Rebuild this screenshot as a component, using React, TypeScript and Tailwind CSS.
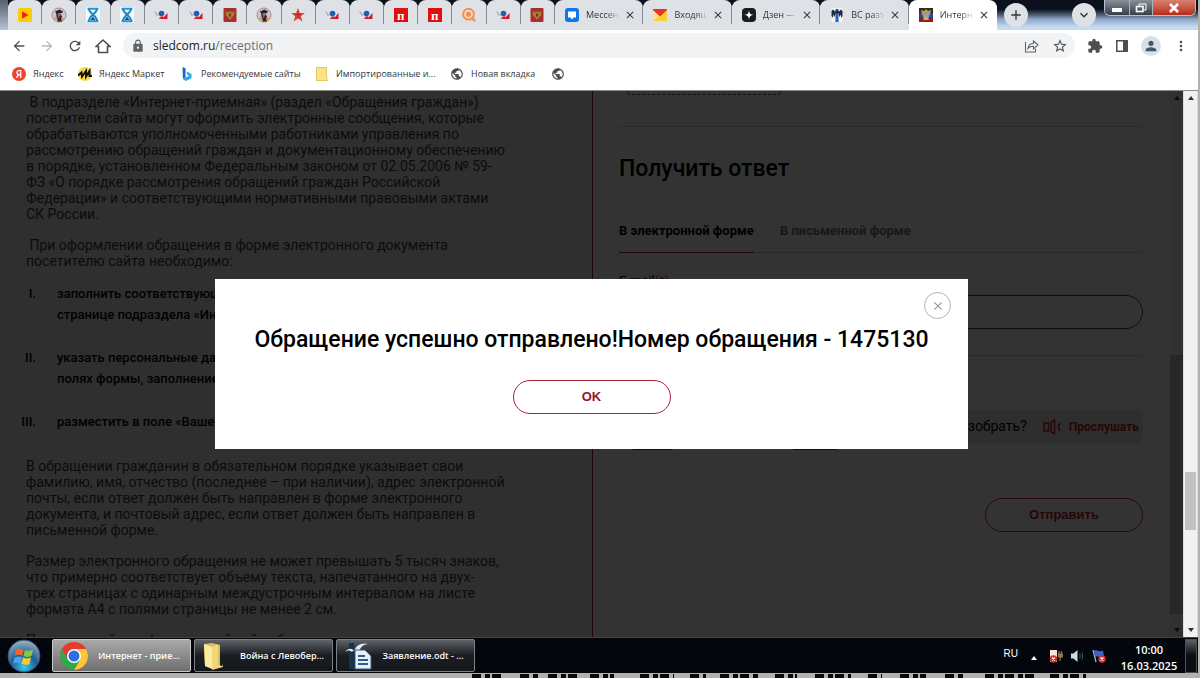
import { ReactNode } from "react";
import clsx from "clsx";
import {
  MdArrowBack, MdArrowForward, MdRefresh, MdLock, MdStarBorder, MdExtension,
  MdPerson, MdMoreVert, MdPublic, MdClose, MdAdd, MdKeyboardArrowDown,
} from "react-icons/md";

/* favicons */

const PlayIcon = () => (
  <svg viewBox="0 0 14 14" className="size-3.5">
    <rect width="14" height="14" rx="1.5" fill="#fc0" />
    <path d="M4 3.2v7.6L10.5 7z" fill="#e8261c" />
  </svg>
);

const PortraitIcon = () => (
  <svg viewBox="0 0 16 16" className="size-4">
    <circle cx="8" cy="8" r="7" fill="#c9c4da" stroke="#b98a6c" strokeWidth="1" />
    <path d="M4 4.500 8.500 2.500 12 4.500 11 6H5z" fill="#26222c" />
    <path d="M6 6h4l.5 2L9 10H7z" fill="#8d6f66" />
    <path d="M5 6h1.500l1 5 2-3 1.500 1v5.500H6.500z" fill="#2b2731" />
    <path d="M3 11l3-1 1 4zM10 10l3 1-2.500 3z" fill="#e08a4b" />
  </svg>
);

const HourglassIcon = () => (
  <svg viewBox="0 0 16 16" className="size-4">
    <rect x="1" width="14" height="16" fill="#f4f9fc" />
    <path d="M2.500 1.800h11M2.500 14.200h11" stroke="#1b9ad6" strokeWidth="2" />
    <path d="M4 2c0 4 8 7 8 12M12 2c0 4-8 7-8 12" fill="none" stroke="#168bc7" strokeWidth="2" />
    <path d="M5.500 13 8 9.500l2.500 3.500z" fill="#1a4f86" />
  </svg>
);

const CourtIcon = () => (
  <svg viewBox="0 0 16 16" className="size-4">
    <path d="M1.500 4.500 8 10" stroke="#d88a90" strokeWidth="1" strokeDasharray="1.500 1" />
    <path d="M5.500 11.500 9.500 9l1 1.500L14.500 6v6H8z" fill="#d5182c" />
    <circle cx="8.500" cy="6.500" r="2.800" fill="#1f5fae" />
    <path d="M2 5l2.500 4" stroke="#8fa3cc" strokeWidth="1" />
  </svg>
);

const EagleIcon = () => (
  <svg viewBox="0 0 14 14" className="size-3.5">
    <rect x=".5" width="13" height="14" rx="1" fill="#a5302c" />
    <path d="M2.500 3l2.500 1.500L6 3l1 1 1-1 1 1.500L11.500 3 11 7.500 8.800 9.500 7 12 5.200 9.500 3 7.500z" fill="#a98037" />
    <path d="M6 5.500h2V8L7 9 6 8z" fill="#9b2320" />
  </svg>
);

const RedStarIcon = () => (
  <svg viewBox="0 0 16 16" className="size-4">
    <path d="M8 1l1.800 5h5l-4 3.200 1.600 5.300L8 11.300l-4.400 3.200 1.600-5.300-4-3.200h5z" fill="#d9412f" />
    <path d="M8 4v8M5 7.500h6" stroke="#b32a20" strokeWidth=".8" />
  </svg>
);

const PiIcon = () => (
  <span className="flex size-3.5 items-center justify-center bg-[#e01010] font-['Liberation_Serif',serif] text-[13px] leading-none font-bold text-white">п</span>
);

const SearchIcon = () => (
  <svg viewBox="0 0 16 16" className="size-4" fill="none" stroke="#f79246">
    <circle cx="7.500" cy="7.200" r="5.400" strokeWidth="2" />
    <circle cx="7.500" cy="7.200" r="2.600" fill="#f79246" stroke="none" />
    <path d="M11 11l3.200 3.200" strokeWidth="2.600" />
  </svg>
);

const MessengerIcon = () => (
  <svg viewBox="0 0 14 14" className="size-3.5">
    <rect width="14" height="14" rx="3" fill="#0f78e8" />
    <path d="M3 3.500h8v6H8.500L7 11.500 5.500 9.500H3z" fill="#fff" />
  </svg>
);

const MailIcon = () => (
  <svg viewBox="0 0 14 12" className="h-3 w-3.5">
    <path d="M0 1h14v11H0z" fill="#fbcf35" />
    <path d="M0 1l7 6-7 5z" fill="#fde08a" />
    <path d="M0 0h14v1L7 7.500 0 1z" fill="#ea3323" />
  </svg>
);

const DzenIcon = () => (
  <svg viewBox="0 0 14 14" className="size-3.5">
    <rect width="14" height="14" rx="4" fill="#1c1c1c" />
    <path d="M7 1.800C7.200 5.600 8.400 6.800 12.200 7 8.400 7.200 7.200 8.400 7 12.200 6.800 8.400 5.600 7.200 1.800 7 5.600 6.800 6.800 5.600 7 1.800z" fill="#fff" />
  </svg>
);

const CoatIcon = () => (
  <svg viewBox="0 0 14 14" className="size-3.5">
    <rect x="1.500" width="11" height="14" fill="#f2f4f8" />
    <path d="M7 1v13" stroke="#2762b4" strokeWidth="3" />
    <path d="M1.500 3 3 1.500 5 3.500 7 2 9 3.500 11 1.500 12.500 3v5L11 10V6.500L9.500 9 8.500 5.500h-3L4.500 9 3 6.500V10L1.500 8z" fill="#222c3d" />
  </svg>
);

const SledcomIcon = () => (
  <svg viewBox="0 0 14 14" className="size-3.5">
    <rect width="14" height="5" fill="#2b2b35" />
    <rect y="5" width="14" height="5" fill="#27489a" />
    <rect y="9" width="14" height="5" fill="#8d1f22" />
    <path d="M2 2l3 1 2-2 2 2 3-1-1 5H3z" fill="#c69a35" />
    <circle cx="7" cy="8" r="3.200" fill="#6fa3d6" />
    <path d="M4 12l3-5 3 5z" fill="#d8b04a" />
  </svg>
);

const pinned = [
  PlayIcon, PortraitIcon, HourglassIcon, HourglassIcon, CourtIcon, CourtIcon, EagleIcon, PortraitIcon,
  RedStarIcon, CourtIcon, CourtIcon, PiIcon, PiIcon, SearchIcon, CourtIcon, EagleIcon,
];

const tabs = [
  { title: "Мессен", icon: MessengerIcon },
  { title: "Входящ", icon: MailIcon },
  { title: "Дзен —", icon: DzenIcon },
  { title: "ВС разъ", icon: CoatIcon },
  { title: "Интерн", icon: SledcomIcon, active: true },
];

const TabStrip = () => (
  <header className="flex h-[30px] shrink-0 bg-linear-to-b from-[#0a111c] from-30% via-[#8fa9c8] via-65% to-[#c5dbf3] to-90%">
    <div className="w-2 shrink-0 bg-linear-to-b from-[#55606e] to-[#b4c4d6]" />
    <div className="flex w-[547px] shrink-0 bg-linear-to-b from-[#0a111c] from-20% to-[#dee1e6] to-20%">
      {pinned.map((Icon, i) => (
        <button key={i} aria-label={`Вкладка ${i + 1}`} className="flex flex-1 items-center rounded-t-lg bg-[#dee1e6]">
          <span className="flex flex-1 justify-center"><Icon /></span>
          <span className="h-[18px] w-px bg-[#85898f]" />
        </button>
      ))}
    </div>
    <div className="flex w-[442px] shrink-0 bg-linear-to-b from-[#0a111c] from-20% to-[#dee1e6] to-20%">
      {tabs.map(({ title, icon: Icon, active }) => (
        <div key={title} className={clsx("flex min-w-0 flex-1 items-center rounded-t-lg pl-2.5", active ? "bg-white" : "bg-[#dee1e6]")}>
          <Icon />
          <button className="ml-[7px] w-[34px] mask-r-from-60% text-left text-[9px] whitespace-nowrap text-[#33373b]">{title}</button>
          <button aria-label="Закрыть вкладку" className="ml-1 text-[#33363a]"><MdClose className="size-3" /></button>
          {!active && <span className="ml-auto h-[18px] w-px bg-[#85898f]" />}
        </div>
      ))}
    </div>
    <button aria-label="Новая вкладка" className="mt-[3px] ml-[7px] flex size-6 items-center justify-center rounded-full bg-[#dee1e6] text-[#303338]">
      <MdAdd className="size-4" />
    </button>
    <div className="ml-auto flex pr-0.5">
      <button aria-label="Поиск вкладок" className="mt-[3px] mr-2 flex size-6 items-center justify-center rounded-full bg-[#dee1e6] text-[#303338]">
        <MdKeyboardArrowDown className="size-4" />
      </button>
      <div className="flex h-4 overflow-hidden rounded-b-md border border-t-0 border-[#b7c1cc]">
        <button aria-label="Свернуть" className="flex w-[25px] items-center justify-center border-r border-[#aab3bd] bg-linear-to-b from-[#8a9097] to-[#383f48]">
          <span className="mt-1 h-1 w-2.5 bg-white" />
        </button>
        <button aria-label="Развернуть" className="flex w-[23px] items-center justify-center border-r border-[#aab3bd] bg-linear-to-b from-[#8a9097] to-[#383f48]">
          <svg viewBox="0 0 12 10" className="h-2.5 w-3" fill="none" stroke="#fff">
            <path d="M4 3V1h7v6H9" />
            <rect x="1.500" y="3.500" width="6.500" height="5" strokeWidth="1.600" />
          </svg>
        </button>
        <button aria-label="Закрыть" className="flex w-[42px] items-center justify-center bg-linear-to-b from-[#d8806f] to-[#b42a14] text-white">
          <svg viewBox="0 0 12 10" className="h-2.5 w-3" stroke="#fff" strokeWidth="2.600">
            <path d="M2 1l8 8M10 1 2 9" />
          </svg>
        </button>
      </div>
    </div>
  </header>
);

const Toolbar = () => (
  <div className="flex h-[31px] shrink-0 items-center gap-3 bg-white pr-[9px] pl-[11px] text-[#4b4f54]">
    <button aria-label="Назад"><MdArrowBack className="size-4" /></button>
    <button aria-label="Вперед" className="text-[#b5b8bb]"><MdArrowForward className="size-4" /></button>
    <button aria-label="Обновить"><MdRefresh className="size-4" /></button>
    <button aria-label="Главная">
      <svg viewBox="0 0 16 16" className="size-4" fill="none" stroke="currentColor" strokeWidth="1.600">
        <path d="M1 8.500 8 2l7 6.500H12.500v6h-9v-6z" />
      </svg>
    </button>
    <div className="flex h-[25px] flex-1 items-center rounded-full bg-[#f1f3f4] pr-[7px] pl-2">
      <MdLock className="size-3.5 text-[#5f6368]" />
      <a href="#reception" className="ml-2 text-[12px] text-[#6a6e73]"><span className="text-[#202124]">sledcom.ru</span>/reception</a>
      <button aria-label="Поделиться" className="ml-auto">
        <svg viewBox="0 0 16 14" className="h-3.5 w-4" fill="none" stroke="#5f6368" strokeWidth="1.100">
          <path d="M1.500 3v10h10V9.500" />
          <path d="M4 9.500C4.500 6 6.500 4.500 9.500 4.300V2l4.500 4-4.500 3.800V7.300C7 7.200 5.300 8 4 9.500z" />
        </svg>
      </button>
      <button aria-label="Добавить в закладки" className="ml-3"><MdStarBorder className="size-4" /></button>
    </div>
    <button aria-label="Расширения"><MdExtension className="size-4" /></button>
    <button aria-label="Боковая панель">
      <svg viewBox="0 0 14 14" className="size-3.5">
        <path d="M1.800 1.800h10.400v10.400H1.800z" fill="none" stroke="#4b4f54" strokeWidth="1.500" />
        <path d="M8 1h5v12H8z" fill="#4b4f54" />
      </svg>
    </button>
    <button aria-label="Профиль" className="flex size-5 items-center justify-center rounded-full bg-[#dadfe5] text-[#44566c]"><MdPerson className="size-4" /></button>
    <button aria-label="Меню"><MdMoreVert className="size-4" /></button>
  </div>
);

const YandexIcon = () => (
  <span className="flex size-3.5 items-center justify-center rounded-full bg-[#f0412d] text-[10px] leading-none font-semibold text-white">Я</span>
);

const MarketIcon = () => (
  <svg viewBox="0 0 14 14" className="size-3.5">
    <circle cx="7" cy="7" r="7" fill="#fbd83f" />
    <path d="M0 8.500 3.500 5.500 4 9.500 8 4 8 9.500 11.500 4 11.500 9H14" fill="none" stroke="#111" strokeWidth="2" />
  </svg>
);

const BingIcon = () => (
  <svg viewBox="0 0 14 14" className="size-3.5">
    <path d="M2.500 0 5.500 1.200v9.300L3 12z" fill="#1b63c9" />
    <path d="M6.500 4.500 11.500 7v4.200L6 14 2.700 12 9 8.800 7.300 7.800z" fill="#2fa8e6" />
  </svg>
);

const NoteIcon = () => (
  <svg viewBox="0 0 12 14" className="h-3.5 w-3">
    <path d="M.5.500h10V11l1 2.500H.5z" fill="#fbe38a" stroke="#e5c75c" />
  </svg>
);

const GlobeIcon = () => <MdPublic className="size-3.5 text-[#4b4f54]" />;

const bookmarks = [
  { title: "Яндекс", icon: YandexIcon, width: "w-[66px]" },
  { title: "Яндекс Маркет", icon: MarketIcon, width: "w-[102px]" },
  { title: "Рекомендуемые сайты", icon: BingIcon, width: "w-[135px]" },
  { title: "Импортированные и...", icon: NoteIcon, width: "w-[135px]" },
  { title: "Новая вкладка", icon: GlobeIcon, width: "w-[101px]" },
  { title: "", icon: GlobeIcon, width: "w-4" },
];

const Bookmarks = () => (
  <nav className="flex h-[30px] shrink-0 items-center border-b border-[#8a8c8c] bg-white pb-1 pl-3 text-[9px] text-[#33373b]">
    {bookmarks.map(({ title, icon: Icon, width }, i) => (
      <a key={i} href="#bookmark" aria-label={title || "Закладка"} className={clsx("flex shrink-0 items-center gap-[7px] whitespace-nowrap", width)}>
        <span className="flex w-3.5 shrink-0 justify-center"><Icon /></span>
        {title}
      </a>
    ))}
  </nav>
);

/* page */

const Lines = ({ lines, className }: { lines: string[], className?: string }) => (
  <p className={clsx("text-[14px] leading-[16px] whitespace-pre text-[#3c3c3c]", className)}>
    {lines.join("\n")}
  </p>
);

const steps = [
  { num: "I.", text: "заполнить соответствующие поля на\nстранице подраздела «Интернет-приемная»" },
  { num: "II.", text: "указать персональные данные в\nполях формы, заполнение которых" },
  { num: "III.", text: "разместить в поле «Ваше обращение»" },
];

const Rules = () => (
  <section className="w-[592px] shrink-0 overflow-hidden bg-[#ebebeb] pt-[3px] pl-[26px]">
    <Lines
      lines={[
        " В подразделе «Интернет-приемная» (раздел «Обращения граждан»)",
        "посетители сайта могут оформить электронные сообщения, которые",
        "обрабатываются уполномоченными работниками управления по",
        "рассмотрению обращений граждан и документационному обеспечению",
        "в порядке, установленном Федеральным законом от 02.05.2006 № 59-",
        "ФЗ «О порядке рассмотрения обращений граждан Российской",
        "Федерации» и соответствующими нормативными правовыми актами",
        "СК России.",
      ]}
    />
    <Lines className="mt-[15px]" lines={[" При оформлении обращения в форме электронного документа", "посетителю сайта необходимо:"]} />
    <ol className="mt-[14px] -ml-[6px] flex flex-col gap-[22px] text-[13px] leading-[21px] font-medium">
      {steps.map(({ num, text }) => (
        <li key={num} className="flex">
          <span className="flex w-4 justify-end whitespace-nowrap">{num}</span>
          <span className="ml-[21px] whitespace-pre">{text}</span>
        </li>
      ))}
    </ol>
    <Lines
      className="mt-[26px]"
      lines={[
        "В обращении гражданин в обязательном порядке указывает свои",
        "фамилию, имя, отчество (последнее – при наличии), адрес электронной",
        "почты, если ответ должен быть направлен в форме электронного",
        "документа, и почтовый адрес, если ответ должен быть направлен в",
        "письменной форме.",
      ]}
    />
    <Lines
      className="mt-[15px]"
      lines={[
        "Размер электронного обращения не может превышать 5 тысяч знаков,",
        "что примерно соответствует объему текста, напечатанного на двух-",
        "трех страницах с одинарным междустрочным интервалом на листе",
        "формата А4 с полями страницы не менее 2 см.",
      ]}
    />
    <Lines className="mt-[15px]" lines={["Поступивший на официальный сайт обращение"]} />
  </section>
);

const ReplyForm = () => (
  <form className="flex min-w-0 flex-1 flex-col overflow-hidden border-l border-[#b01828] pr-[27px] pl-[26px]">
    <div className="ml-2 h-1 w-[154px] rounded-b border border-t-0 border-dashed border-[#555]" />
    <hr className="mt-[31px] border-[#d0d0d0]" />
    <h2 className="mt-[26px] text-[23px] leading-8 font-medium">Получить ответ</h2>
    <div className="mt-[37px] flex gap-[26px] border-b border-[#d0d0d0] text-[13px] leading-[18px] font-bold">
      <button type="button" className="-mb-px border-b border-[#c41c28] pb-[12px]">В электронной форме</button>
      <button type="button" className="pb-[12px] text-[#777]">В письменной форме</button>
    </div>
    <label htmlFor="email" className="mt-[18px] text-[13px] leading-5">E-mail<span className="text-[#c41c28]">(*)</span></label>
    <input id="email" type="email" className="mt-1 h-[34px] w-full rounded-full border border-[#444] px-4" />
    <hr className="mt-[26px] border-[#d0d0d0]" />
    <div className="mt-[53px] flex h-[35px] items-center justify-end gap-4 rounded-lg bg-[#e4e4e4] pr-1">
      <span className="text-[14px]">Не разобрать?</span>
      <button type="button" className="flex items-center gap-2 text-[12px] font-bold text-[#c41c28]">
        <svg viewBox="0 0 18 16" className="h-4 w-[18px]" fill="none" stroke="currentColor" strokeWidth="1.500">
          <rect x="1" y="4" width="4.500" height="8" />
          <path d="M8 3.500 11.500 1v14L8 12.500zM17 4c-2 2-2 6 0 8" />
        </svg>
        Прослушать
      </button>
    </div>
    <div className="mt-1 ml-[13px] flex h-0.5 gap-[120px]">
      <span className="w-[41px] rounded-b-full bg-[#555]" />
      <span className="w-[45px] rounded-b-full bg-[#555]" />
    </div>
    <button type="submit" className="mt-12 h-[34px] w-[158px] self-end rounded-full border border-[#e01c28] font-['Liberation_Sans',sans-serif] text-[13px] font-bold text-[#c41c28]">Отправить</button>
  </form>
);

const Arrow = ({ down }: { down?: boolean }) => (
  <svg viewBox="0 0 6 4" className={clsx("h-1 w-1.5 fill-[#333]", down && "rotate-180")}><path d="M0 4l3-4 3 4z" /></svg>
);

const Scrollbar = ({ className, children }: { className: string, children: ReactNode }) => (
  <div className={clsx("flex shrink-0 flex-col items-center py-[5px]", className)}>
    <Arrow />
    {children}
    <Arrow down />
  </div>
);

const SuccessDialog = () => (
  <div className="absolute inset-0 flex items-center justify-center bg-black/80">
    <div role="dialog" aria-labelledby="dialog-title" className="relative flex w-[753px] max-w-full flex-col items-center bg-white pt-[45px] pb-[35px]">
      <button aria-label="Закрыть" className="absolute top-[13px] right-[17px] flex size-[27px] items-center justify-center rounded-full border border-[#b3b3b3] text-[#999]">
        <MdClose className="size-3.5 stroke-current" />
      </button>
      <h1 id="dialog-title" className="text-[23px] leading-8 font-medium whitespace-nowrap">Обращение успешно отправлено!Номер обращения - 1475130</h1>
      <button className="mt-[24px] h-[34px] w-[158px] rounded-full border border-[#a3253c] font-['Liberation_Sans',sans-serif] text-[13px] font-bold text-[#96142a]">OK</button>
    </div>
  </div>
);

/* taskbar */

const StartOrb = () => (
  <svg viewBox="0 0 34 34" className="size-[34px]">
    <defs>
      <radialGradient id="orb" cx=".5" cy=".85" r=".8">
        <stop offset="0" stopColor="#38c8f4" />
        <stop offset=".5" stopColor="#1c5f97" />
        <stop offset="1" stopColor="#8fa9bd" />
      </radialGradient>
    </defs>
    <circle cx="17" cy="17" r="16" fill="url(#orb)" stroke="#3c5268" />
    <path d="M9 11c3-2 5-1.500 7.500-.5l-1.500 6c-2.500-1-4.500-1-7.500.5z" fill="#f0642d" />
    <path d="M18 11c3 1.300 5 1 8-.5l-1.500 6.500c-3 1.300-5 1.300-8 0z" fill="#8cc63e" />
    <path d="M7.500 18.500c3-1.300 5-1.300 7.500-.3l-1.500 6c-2.500-1-4.500-1-7.500.3z" fill="#4fa3e6" />
    <path d="M16 18.500c3 1.300 5 1.300 8 0L22.500 25c-3 1.300-5 1-8-.3z" fill="#fbc82f" />
  </svg>
);

const ChromeIcon = () => (
  <svg viewBox="0 0 28 28" className="size-7">
    <circle cx="14" cy="14" r="14" fill="#e33b2e" />
    <path d="M14 7H26.100A14 14 0 0 1 14 28L20.100 17.500z" fill="#fcc934" />
    <path d="M1.900 7A14 14 0 0 0 14 28L20.100 17.500 14 14 7.900 17.500z" fill="#2da94f" />
    <circle cx="14" cy="14" r="7" fill="#fff" />
    <circle cx="14" cy="14" r="5.500" fill="#2d6fe0" />
  </svg>
);

const FolderIcon = () => (
  <svg viewBox="0 0 28 28" className="size-7">
    <path d="M4 2l8-1 8 2v21l-8 2-7-2z" fill="#d9bf5c" />
    <path d="M4 2l8 3v22l-7-3z" fill="#fbeb9e" />
    <path d="M12 5l6-3v21l4 1v-2l1 3-11 3z" fill="#f0d77a" />
  </svg>
);

const OdtIcon = () => (
  <svg viewBox="0 0 28 28" className="size-7">
    <path d="M5 1h5v26H5z" fill="#16324e" />
    <path d="M1 10c4-5 8-3 9-1 2-6 8-9 14-7-5 0-8 4-9 8-2-3-5-3-7 0-2-2-4-2-7 0z" fill="#dfeaf4" />
    <path d="M11 8h10l6 6v13H11z" fill="#e6eef6" stroke="#37618c" />
    <path d="M14 14h7M14 18h10M14 22h10" stroke="#2d5c8c" strokeWidth="2" />
  </svg>
);

const tasks = [
  { title: "Интернет - прие...", icon: ChromeIcon, gap: "pl-[7px]", active: true },
  { title: "Война с Левобер...", icon: FolderIcon, gap: "gap-1 pl-[5px]" },
  { title: "Заявление.odt - ...", icon: OdtIcon, gap: "pl-[7px]" },
];

const Taskbar = () => (
  <footer className="flex h-9 shrink-0 items-center border-t border-[#3a4350] bg-[#03060c] pr-px pl-[7px] text-white">
    <button aria-label="Пуск" className="mr-[11px]"><StartOrb /></button>
    <div className="flex gap-[3px]">
      {tasks.map(({ title, icon: Icon, gap, active }) => (
        <button
          key={title}
          className={clsx(
            "flex h-[33px] w-[139px] items-center rounded-xs border text-[9px] font-semibold whitespace-nowrap",
            gap,
            active
              ? "border-[#c9c9c9] bg-linear-to-b from-[#a9a9a9] to-[#6f6f6f]"
              : "border-[#7c8084] bg-linear-to-b from-[#60646a] via-[#1a1d21] via-50% to-[#15181b]",
          )}
        >
          <Icon />
          <span className="flex-1 text-center">{title}</span>
        </button>
      ))}
    </div>
    <span className="ml-auto pb-1 font-['Liberation_Sans',sans-serif] text-[10px]">RU</span>
    <svg viewBox="0 0 6 4" className="mt-1 ml-[13px] h-1 w-1.5 fill-white"><path d="M0 4l3-4 3 4z" /></svg>
    <svg viewBox="0 0 14 14" className="ml-3 size-3.5">
      <path d="M1 1h7v12H1z" fill="#efe6d4" />
      <path d="M10 2v3M12.500 2v3M9.500 5h4v3h-4zM11 8v4" stroke="#8b7a5c" strokeWidth="1.200" fill="#8b7a5c" />
      <circle cx="4.500" cy="10" r="3.800" fill="#d42a20" />
      <path d="M3 8.500l3 3M6 8.500l-3 3" stroke="#fff" strokeWidth="1.200" />
    </svg>
    <svg viewBox="0 0 14 14" className="ml-[7px] size-3.5" fill="none">
      <path d="M1 4.500h2.500L7.500 1v12L3.500 9.500H1z" fill="#d5dae0" />
      <path d="M9.500 4.500c1 1.500 1 3.500 0 5M11.500 3c1.600 2.300 1.600 5.700 0 8" stroke="#226078" />
    </svg>
    <svg viewBox="0 0 14 14" className="ml-2 size-3.5">
      <path d="M1 1l3 12" stroke="#b9c4d8" strokeWidth="1.200" />
      <path d="M1.500 2c3-2 5 1.500 9.500-.5l1 6c-4 2-6-1-9 .5z" fill="#3d62c8" />
      <circle cx="10" cy="10" r="3.800" fill="#d42a30" />
      <path d="M8.500 8.500l3 3M11.500 8.500l-3 3" stroke="#fff" strokeWidth="1.300" />
    </svg>
    <time className="ml-3.5 w-[58px] pt-1 text-center text-[11px] leading-4 font-semibold">10:00<br />16.03.2025</time>
    <button aria-label="Свернуть все окна" className="ml-[7px] h-[34px] w-3 border border-[#4b5157] bg-linear-to-b from-[#5d6268] to-[#0b0d10] to-50%" />
  </footer>
);

export default function App() {
  return (
    <div className="flex h-screen flex-col overflow-hidden bg-[#b3b2a8] pr-0.5 font-['Open_Sans','Noto_Sans',sans-serif]">
      <TabStrip />
      <Toolbar />
      <Bookmarks />
      <main className="flex min-h-0 flex-1 font-[Roboto,sans-serif] text-black">
        <div className="relative flex min-w-0 flex-1 overflow-hidden bg-white">
          <Rules />
          <ReplyForm />
          <Scrollbar className="w-[13px] bg-[#f4f4f4]">
            <div className="mt-auto mb-3.5 h-[259px] w-full bg-[#c1c1c1]" />
          </Scrollbar>
          <SuccessDialog />
        </div>
        <Scrollbar className="w-[15px] border-x border-[#dcdcdc] bg-[#f1f1f1]">
          <div className="mt-auto mb-[98px] h-[58px] w-[11px] bg-[#c1c1c1]" />
        </Scrollbar>
      </main>
      <Taskbar />
      <svg className="h-[5px] w-full shrink-0" aria-hidden="true">
        <path d="M472 3h32M520 3h20M548 3h30M590 3h24M640 3h34M690 3h16M720 3h40M775 3h22M815 3h36M868 3h14M900 3h26M945 3h20M985 3h52M1050 3h36" stroke="#0a0a0a" strokeWidth="4" strokeDasharray="9 4 5 2" />
      </svg>
    </div>
  );
}
